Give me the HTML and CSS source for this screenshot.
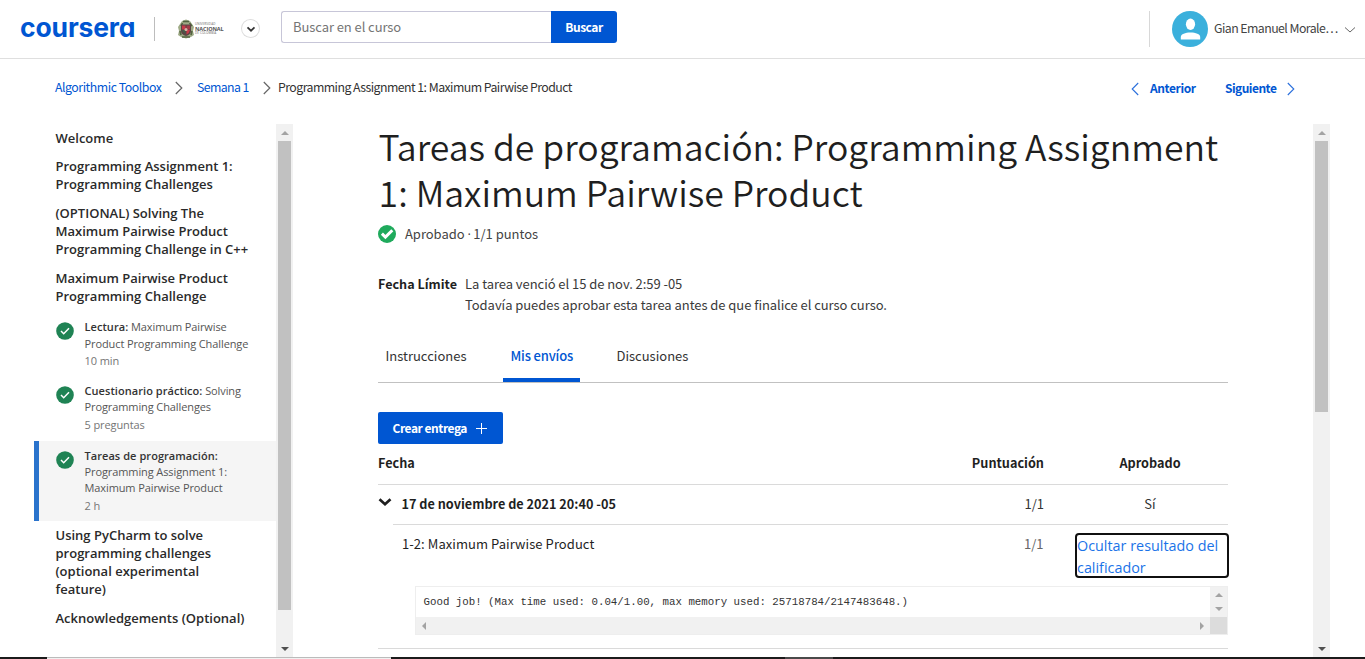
FILE: index.html
```html
<!DOCTYPE html>
<html lang="es">
<head>
<meta charset="utf-8">
<title>Programming Assignment 1: Maximum Pairwise Product | Coursera</title>
<link rel="stylesheet" href="styles.css">
</head>
<body>
<header class="topbar">
  <a class="logo">coursera</a>
  <span class="divider"></span>
  <div class="partner">
    <svg class="crest" width="18" height="20" viewBox="0 0 18 20">
      <path d="M5 2 9 .5 13 2l2 3 2 3-1 4 1 4-3 2-5 1.500-5-1.500-3-2 1-4-1-4 2-3z" fill="#9fab86"/>
      <path d="M5.500 4 4 7M12.500 4 15 7M3 12l1 4M15 12l-1 4M6 2.500h6M5 18h8" stroke="#526441" stroke-width="1.600" fill="none"/>
      <path d="M4 5.500h10v6.500q0 3.500-5 5-5-1.500-5-5z" fill="#5b4544"/>
      <path d="M5 6.500h3.500v4H5zM9.500 11H13q-.5 3-3.500 4.500z" fill="#c83a49"/>
      <path d="M9.500 6.500H13v4H9.500z" fill="#a33a46"/>
      <path d="M5 11h3.500v4Q5.500 13.500 5 11z" fill="#465a49"/>
      <circle cx="9" cy="10.500" r="1.500" fill="#d9b6a8"/>
    </svg>
    <span class="partner-name"><small>UNIVERSIDAD</small><b>NACIONAL</b><small>DE COLOMBIA</small></span>
  </div>
  <span class="round"><svg width="18" height="18" viewBox="0 0 18 18"><path d="m5.500 7.300 3.500 3.400 3.500-3.400" fill="none" stroke="#333" stroke-width="1.700"/></svg></span>
  <form class="search"><div class="field">Buscar en el curso</div><div class="go">Buscar</div></form>
  <div class="account">
    <svg width="36" height="36" viewBox="0 0 36 36"><circle cx="18" cy="18" r="18" fill="#3bb0dc"/><ellipse cx="18.500" cy="13.200" rx="4.600" ry="5.700" fill="#fff"/><path d="M8.800 28.500V26c0-3 4.500-4.500 9.700-4.500s9.700 1.500 9.700 4.500v2.500z" fill="#fff"/></svg>
    <span class="user">Gian Emanuel Morale…</span>
    <svg class="caret" width="12" height="8" viewBox="0 0 12 8"><path d="m1 1.500 5 4.500 5-4.500" fill="none" stroke="#666"/></svg>
  </div>
</header>

<nav class="crumbs">
  <a class="c1">Algorithmic Toolbox</a>
  <svg class="sep1" width="8" height="14" viewBox="0 0 8 14"><path d="m.8 1 6 6-6 6" fill="none" stroke="#666" stroke-width="1.200"/></svg>
  <a class="c2">Semana 1</a>
  <svg class="sep2" width="8" height="14" viewBox="0 0 8 14"><path d="m.8 1 6 6-6 6" fill="none" stroke="#666" stroke-width="1.200"/></svg>
  <span class="c3">Programming Assignment 1: Maximum Pairwise Product</span>
  <div class="pager">
    <svg width="8" height="14" viewBox="0 0 8 14"><path d="m7.200 1-6 6 6 6" fill="none" stroke="#2a6fdc" stroke-width="1.100"/></svg>
    <a class="prev">Anterior</a><a class="next">Siguiente</a>
    <svg width="8" height="14" viewBox="0 0 8 14"><path d="m.8 1 6 6-6 6" fill="none" stroke="#2a6fdc" stroke-width="1.100"/></svg>
  </div>
</nav>

<div class="page">
  <aside class="sidebar">
    <div class="lessons">
      <h3 class="first">Welcome</h3>
      <h3 class="second">Programming Assignment 1:<br>Programming Challenges</h3>
      <h3>(OPTIONAL) Solving The<br>Maximum Pairwise Product<br>Programming Challenge in C++</h3>
      <h3 class="open">Maximum Pairwise Product<br>Programming Challenge</h3>
      <div class="item reading">
        <svg width="18" height="18" viewBox="0 0 18 18"><circle cx="9" cy="9" r="8.800" fill="#1f8354"/><path d="m5 9 2.700 2.700L13 6.300" fill="none" stroke="#fff" stroke-width="1.500"/></svg>
        <p><b>Lectura:</b> Maximum Pairwise<br>Product Programming Challenge<small>10 min</small></p>
      </div>
      <div class="item">
        <svg width="18" height="18" viewBox="0 0 18 18"><circle cx="9" cy="9" r="8.800" fill="#1f8354"/><path d="m5 9 2.700 2.700L13 6.300" fill="none" stroke="#fff" stroke-width="1.500"/></svg>
        <p><b>Cuestionario práctico:</b> Solving<br>Programming Challenges<small>5 preguntas</small></p>
      </div>
      <div class="item current">
        <svg width="18" height="18" viewBox="0 0 18 18"><circle cx="9" cy="9" r="8.800" fill="#1f8354"/><path d="m5 9 2.700 2.700L13 6.300" fill="none" stroke="#fff" stroke-width="1.500"/></svg>
        <p><b>Tareas de programación:</b><br>Programming Assignment 1:<br>Maximum Pairwise Product<small>2 h</small></p>
      </div>
      <h3 class="after">Using PyCharm to solve<br>programming challenges<br>(optional experimental<br>feature)</h3>
      <h3>Acknowledgements (Optional)</h3>
    </div>
    <div class="bar"><i class="up"></i><i class="thumb side-thumb"></i><i class="down"></i></div>
  </aside>

  <main class="content">
    <h1>Tareas de programación: Programming Assignment<br>1: Maximum Pairwise Product</h1>
    <div class="status">
      <svg width="18" height="18" viewBox="0 0 18 18"><circle cx="9" cy="9" r="9" fill="#1faa5c"/><path d="m3.900 8.700 3.500 3.400 6.900-6.900" fill="none" stroke="#fff" stroke-width="3"/></svg>
      <span>Aprobado <em>·</em> 1/1 puntos</span>
    </div>
    <dl class="due"><dt>Fecha Límite</dt><dd>La tarea venció el 15 de nov. 2:59 -05<br>Todavía puedes aprobar esta tarea antes de que finalice el curso curso.</dd></dl>
    <div class="tabs"><a>Instrucciones</a><a class="active">Mis envíos</a><a>Discusiones</a></div>
    <a class="create">Crear entrega <svg width="13" height="13" viewBox="0 0 13 13"><path d="M6.500 1v11M1 6.500h11" stroke="#fff" fill="none"/></svg></a>
    <div class="row head"><span class="date">Fecha</span><span class="score">Puntuación</span><span class="pass">Aprobado</span></div>
    <div class="row sum">
      <svg width="14" height="9" viewBox="0 0 14 9"><path d="m1.500 1.300 5.500 5 5.500-5" fill="none" stroke="#1f1f1f" stroke-width="2.700"/></svg>
      <span class="date">17 de noviembre de 2021 20:40 -05</span><span class="score">1/1</span><span class="pass">Sí</span>
    </div>
    <div class="detail">
      <span class="part">1-2: Maximum Pairwise Product</span><span class="points">1/1</span>
      <a class="toggle">Ocultar resultado del<br>calificador</a>
    </div>
    <div class="output">
      <pre>Good job! (Max time used: 0.04/1.00, max memory used: 25718784/2147483648.)</pre>
      <div class="vbar"><i class="up"></i><i class="down"></i></div>
      <div class="hbar"><i class="left"></i><i class="right"></i></div>
      <div class="corner"></div>
    </div>
  </main>
  <div class="bar main-bar"><i class="up"></i><i class="thumb main-thumb"></i><i class="down"></i></div>
</div>
<footer class="edge"><i class="light"></i><i class="grey"></i></footer>
</body>
</html>
```

FILE: styles.css
```css
* { box-sizing: border-box; }
body {
  margin: 0; width: 1365px; height: 659px; overflow: hidden;
  display: flex; flex-direction: column;
  background: #fff; color: #1f1f1f;
  font: 13px/20px "Noto Sans CJK SC", sans-serif;
}
h1, h3, p, dl, dd, pre { margin: 0; }
svg { display: block; flex: none; }
i { display: block; }

.topbar { flex: none; height: 59px; border-bottom: 1px solid #dfdfdf; display: flex; align-items: flex-start; }
.logo {
  width: 134px; margin-left: 20px; padding-top: 10px; color: #0056d2;
  font: 700 26.500px/34px Inter, sans-serif; font-feature-settings: "cv11"; letter-spacing: -.15px;
}
.divider { width: 1px; height: 24px; margin-top: 17px; background: #bdbdbd; }
.partner { display: flex; width: 69px; margin: 19px 0 0 22px; }
.partner-name { display: flex; flex-direction: column; padding: 4px 0 0 0; font-family: "Open Sans", sans-serif; color: #666; white-space: nowrap; }
.partner-name small { font-size: 3px; line-height: 3px; letter-spacing: .1px; }
.partner-name b { font-size: 5.500px; line-height: 6px; color: #555; letter-spacing: -.1px; }
.round { width: 17px; height: 17px; margin: 20px 0 0 -4.500px; border-radius: 50%; box-shadow: 0 0 0 1px #ddd; }
.search { display: flex; width: 336px; height: 32px; margin: 11px 0 0 22.500px; }
.field { width: 270px; border: 1px solid #c7c6d8; border-right: 0; border-radius: 3px 0 0 3px; padding: 5px 11px; color: #757575; font-size: 13px; letter-spacing: -.08px; }
.go { width: 66px; background: #0056d2; color: #fff; border-radius: 0 3px 3px 0; font-weight: 700; font-size: 12px; line-height: 31px; text-align: center; letter-spacing: -.5px; }
.account { display: flex; margin: 11px 0 0 auto; padding-left: 22px; width: 216px; height: 36px; border-left: 1px solid #d8d8d8; }
.user { width: 132px; padding: 7px 0 0 6px; font-size: 12.300px; letter-spacing: -.55px; color: #444; white-space: nowrap; }
.caret { margin: 15px 0 0 4px; }

.crumbs { flex: none; height: 65px; padding: 18px 0 0 55px; display: flex; font-size: 12.300px; white-space: nowrap; }
.crumbs a { color: #0056d2; }
.c1 { width: 120px; letter-spacing: -.45px; }
.c2 { width: 58px; letter-spacing: -.6px; }
.crumbs > svg { margin-top: 4px; }
.sep1 { margin-right: 14px; }
.sep2 { margin: 0 7px 0 8px; }
.c3 { letter-spacing: -.54px; color: #333; }
.pager { display: flex; width: 165px; margin-left: auto; margin-right: 69px; font-weight: 700; font-size: 12px; letter-spacing: -.4px; padding-top: 1px; }
.pager svg { margin-top: 4px; }
.prev { width: 75px; margin-left: 11px; }
.next { width: 62px; letter-spacing: -.52px; }

.page { flex: none; height: 533px; display: flex; }
.sidebar { display: flex; width: 259px; margin-left: 34px; font-family: "Open Sans", sans-serif; }
.lessons { width: 242px; }
.lessons h3 { padding: 5px 0 5.500px 21.500px; font-size: 13px; line-height: 18px; font-weight: 600; color: #2a2a2a; white-space: nowrap; }
.lessons h3.first { padding-bottom: 5px; }
.lessons h3.second { padding-bottom: 6px; }
.lessons h3.open { padding-bottom: 6px; }
.item { display: flex; padding: 7px 0; border-left: 5px solid transparent; }
.item.reading p { line-height: 17px; }
.item.reading svg { margin-top: 4px; }
.item svg { margin: 3px 10.500px 0 17px; }
.item p { font-size: 11px; line-height: 16px; letter-spacing: -.1px; color: #555; white-space: nowrap; }
.item b { font-weight: 600; letter-spacing: .06px; color: #333; }
.item small { display: block; font-size: 11px; line-height: 18px; padding-top: 1px; height: 18px; color: #757575; }
.item.reading small { padding-top: 0; height: 17px; }
.item:not(.current):not(.reading) { padding-bottom: 8px; }
.item.current { background: #f5f5f5; border-color: #2a73cc; }
.lessons h3.after { padding-bottom: 6px; }

.bar { display: flex; flex-direction: column; align-items: center; width: 17px; height: 533px; padding: 7px 0 6px; background: #f1f1f1; }
.thumb { width: 13px; margin-top: 6px; background: #c1c1c1; }
.side-thumb { height: 469px; }
.main-thumb { height: 271px; }
.up, .down { width: 0; height: 0; border: 4px solid transparent; border-top-width: 0; border-bottom: 4px solid #a3a3a3; }
.down { border-width: 4px 4px 0; border-top-color: #505050; border-bottom-color: transparent; }
.bar .down { margin-top: auto; }

.content { width: 850px; height: 525px; margin-left: 85px; border-bottom: 1px solid #dadada; }
h1 { margin-top: -1px; padding-left: .6px; font-size: 35.600px; font-weight: 350; line-height: 46px; white-space: nowrap; }
.status { display: flex; margin-top: 10px; height: 48px; color: #444; }
.status span { margin-left: 9px; font-size: 13px; line-height: 18px; letter-spacing: -.03px; white-space: nowrap; }
.status em { font-family: "Open Sans", sans-serif; font-style: normal; letter-spacing: -.4px; }
.due { display: flex; height: 64px; line-height: 21px; white-space: nowrap; }
.due dt { width: 87px; font-weight: 700; font-size: 12.610px; }
.due dd { color: #3a3a3a; letter-spacing: -.05px; }
.tabs { display: flex; height: 46px; border-bottom: 1px solid #c1c1c1; gap: 29px; }
.tabs a { height: 45px; padding: 9px 7.500px 0; color: #333; }
.tabs .active { width: 77px; padding-right: 0; color: #0056d2; font-weight: 500; border-bottom: 4px solid #0056d2; border-radius: 2px 2px 0 0; letter-spacing: -.17px; }
.create { display: flex; width: 125px; height: 32px; margin-top: 29px; padding-left: 14.500px; background: #0056d2; border-radius: 2px; color: #fff; font-weight: 700; font-size: 12px; line-height: 31px; letter-spacing: -.46px; white-space: nowrap; }
.create svg { margin: 10px 0 0 8px; }
.row { display: flex; height: 41px; line-height: 20px; padding-top: 9px; border-bottom: 1px solid #dadada; }
.row .date { flex: 1; font-weight: 700; font-size: 12.680px; white-space: nowrap; }
.row .score { width: 100px; text-align: right; }
.row .pass { width: 156px; margin-left: 28px; text-align: center; }
.head .score, .head .pass { font-weight: 700; font-size: 12.680px; }
.sum { height: 39px; border-bottom: 0; }
.sum svg { margin: 4px 9.500px 0 0; }
.sum .score, .sum .pass { color: #333; }
.detail { display: flex; height: 62px; margin-left: 15px; padding: 8px 0 0 9px; border-top: 1px solid #dadada; }
.part { flex: 1; padding-top: 1px; letter-spacing: .06px; }
.points { padding-top: 1px; margin-right: 31.500px; color: #666; }
.toggle { width: 154px; height: 45px; margin-right: -1px; border: 2px solid #101010; border-radius: 4px; color: #1a73e8; font: 14.350px/22px "Open Sans", sans-serif; white-space: nowrap; }
.toggle { line-height: 21.500px; margin-left: 0; letter-spacing: .01px; }
.output { display: grid; grid-template-columns: 1fr 17px; grid-template-rows: 30px 17px; width: 813px; height: 49px; margin-left: 37px; border: 1px solid #eee; }
.output pre { padding: 7px 7.500px; font: 10.780px/16px "Liberation Mono", monospace; color: #333; }
.vbar, .hbar { background: #f1f1f1; display: flex; align-items: center; justify-content: space-between; }
.vbar { flex-direction: column; padding: 6px 0 6px; }
.vbar .down { border-top-color: #a3a3a3; }
.hbar { padding: 0 6px; }
.left, .right { width: 0; height: 0; border: 4px solid transparent; border-left-width: 0; border-right-color: #a3a3a3; }
.right { border-width: 4px 0 4px 4px; border-left-color: #a3a3a3; }
.corner { background: #dcdcdc; }
.main-bar { margin-left: 85px; }
.edge { flex: none; height: 2px; background: #1b1b1b; display: flex; }
.edge .light { width: 344px; margin-left: 47px; background: #f1f1f1; border-top: 1px solid #bbb; }
.edge .grey { width: 48px; margin-left: 394px; background: #4a4a4a; }
```
